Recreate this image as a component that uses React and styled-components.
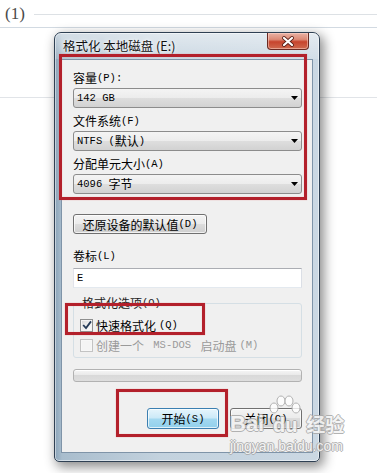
import React from 'react';
import styled, { createGlobalStyle } from 'styled-components';

const Global = createGlobalStyle`
  html, body { margin: 0; padding: 0; background: #fff; }
  body { font-family: "Noto Sans CJK SC", "Noto Sans", sans-serif; }
`;

const Page = styled.div`
  position: relative;
  width: 377px;
  height: 473px;
  overflow: hidden;
  background:
    linear-gradient(to bottom, transparent 97px, #e1e4e8 97px, #e1e4e8 98px, transparent 98px),
    #fff;
`;

const TopStrip = styled.div`
  height: 27px;
  border-bottom: 1px solid #d2dae2;
  display: flex;
  align-items: center;
  gap: 9px;
  padding-left: 5px;
`;

const StepNo = styled.span`
  font-family: "Liberation Serif", serif;
  font-size: 17px;
  color: #4a4a4a;
  line-height: 1;
`;

const Rule = styled.div`
  flex: 1;
  height: 1px;
  margin-top: 1px;
  background: #dde1e5;
`;

const Dialog = styled.div`
  position: relative;
  box-sizing: border-box;
  width: 266px;
  height: 430px;
  margin: 4px 0 0 54px;
  border: 1px solid #2f4053;
  border-radius: 7px 7px 5px 5px;
  padding: 0 6px 8px;
  background: linear-gradient(to right, #8aa3b8 0, #a9bdcd 7px, #c3d2de 40%, #cbd8e3 100%);
  box-shadow: 3px 4px 12px 1px rgba(0, 0, 0, 0.45), inset 0 0 0 1px rgba(255, 255, 255, 0.5);
  display: flex;
  flex-direction: column;
`;

const TitleBar = styled.div`
  height: 26px;
  display: flex;
  justify-content: space-between;
  align-items: flex-start;
  background: linear-gradient(to bottom, rgba(255,255,255,0.5), rgba(255,255,255,0.15));
  margin: 0 -6px;
  padding: 0 6px;
  border-radius: 6px 6px 0 0;
`;

const Title = styled.span`
  padding-left: 2px;
  line-height: 26px;
  font-size: 12.5px;
  color: #111;
  white-space: pre;
  text-shadow: 0 0 6px #fff, 0 0 3px #fff;
`;

const CloseBtn = styled.div`
  box-sizing: border-box;
  width: 42px;
  height: 17px;
  margin-right: 4px;
  border: 1px solid #6a2a22;
  border-top: 0;
  border-radius: 0 0 4px 4px;
  background: linear-gradient(to bottom, #eab2a4 0%, #dd8a76 40%, #c7442d 55%, #cf6a4f 100%);
  box-shadow: inset 0 0 0 1px rgba(255, 220, 210, 0.5);
  display: flex;
  align-items: center;
  justify-content: center;
`;

const Client = styled.div`
  flex: 1;
  background: #f0f0f0;
  border: 1px solid #7f94a8;
  padding: 8px 10px 0 11px;
  display: flex;
  flex-direction: column;
`;

const Field = styled.div`
  margin-top: ${(p) => p.$mt || 0}px;
  display: flex;
  flex-direction: column;
`;

const Label = styled.div`
  height: 20px;
  line-height: 20px;
  font-size: 12px;
  color: #000;
  white-space: pre;
  display: flex;
  align-items: center;
`;

const Han = styled.span`
  font-family: "Noto Sans CJK SC", sans-serif;
  font-size: 12px;
  white-space: pre;
`;

const Lat = styled.span`
  font-family: "Liberation Mono", monospace;
  font-size: 10.5px;
  white-space: pre;
`;

const Select = styled.div`
  box-sizing: border-box;
  height: 20px;
  border: 1px solid #8c8c8c;
  border-radius: 3px;
  background: linear-gradient(to bottom, #f4f4f4 0%, #ececec 50%, #dedede 50%, #d2d2d2 100%);
  display: flex;
  align-items: center;
  justify-content: space-between;
  padding: 0 3px;
  color: #000;
`;

const SelText = styled.span`
  display: flex;
  align-items: center;
  line-height: 18px;
`;

const PushButton = styled.div`
  box-sizing: border-box;
  width: ${(p) => p.$w}px;
  height: ${(p) => p.$h || 20}px;
  margin-top: ${(p) => p.$mt || 0}px;
  border: 1px solid ${(p) => (p.$primary ? '#3c7fb1' : '#707070')};
  border-radius: 3px;
  background: ${(p) =>
    p.$primary
      ? 'linear-gradient(to bottom, #e6f5fc 0%, #cdeaf8 45%, #a2d8f0 55%, #92d0ec 100%)'
      : 'linear-gradient(to bottom, #f4f4f4 0%, #ebebeb 50%, #dddddd 50%, #cfcfcf 100%)'};
  box-shadow: inset 0 0 0 1px rgba(255, 255, 255, 0.7);
  display: flex;
  align-items: center;
  justify-content: center;
  color: #000;
`;

const TextBox = styled.div`
  box-sizing: border-box;
  height: 20px;
  margin-top: 2px;
  background: #fff;
  border: 1px solid;
  border-color: #abadb3 #dbdfe6 #e3e9ef #e2e3ea;
  padding-left: 3px;
  display: flex;
  align-items: center;
  color: #000;
`;

const Group = styled.fieldset`
  margin: 8px 0 0;
  padding: 0 6px 2px;
  min-width: 0;
  border: 1px solid #d5dfe5;
  border-radius: 3px;
`;

const GroupTitle = styled.legend`
  padding: 0 2px;
  margin-left: 0;
  line-height: 14px;
  height: 14px;
  display: flex;
  align-items: center;
  color: #222;
`;

const CheckRow = styled.div`
  height: 20px;
  margin-top: ${(p) => p.$mt || 0}px;
  display: flex;
  align-items: center;
  gap: 3px;
  color: ${(p) => (p.$disabled ? '#9a9a9a' : '#000')};
`;

const Box = styled.div`
  box-sizing: border-box;
  width: 13px;
  height: 13px;
  border: 1px solid ${(p) => (p.$disabled ? '#c3c3c3' : '#8e8f8f')};
  background: ${(p) =>
    p.$disabled ? '#f4f4f4' : 'linear-gradient(135deg, #d8d8d8 0%, #f2f2f2 60%, #ffffff 100%)'};
  box-shadow: inset 0 0 0 1px ${(p) => (p.$disabled ? '#f7f7f7' : '#f4f4f4')};
  display: flex;
  align-items: center;
  justify-content: center;
`;

const Progress = styled.div`
  box-sizing: border-box;
  height: 13px;
  margin-top: 11px;
  border: 1px solid #b2b2b2;
  border-radius: 3px;
  background: linear-gradient(to bottom, #f6f6f6 0%, #e8e8e8 50%, #d9d9d9 50%, #dedede 100%);
  box-shadow: inset 0 1px 0 #fff;
`;

const ButtonRow = styled.div`
  margin-top: 26px;
  display: flex;
  justify-content: flex-end;
  gap: 11px;
`;

const Mark = styled.div`
  position: absolute;
  box-sizing: border-box;
  left: ${(p) => p.$x}px;
  top: ${(p) => p.$y}px;
  width: ${(p) => p.$w}px;
  height: ${(p) => p.$h}px;
  border: 3px solid #b3202b;
  box-shadow: 0 0 1px rgba(230, 120, 120, 0.7), inset 0 0 1px rgba(230, 120, 120, 0.7);
  pointer-events: none;
`;

const Watermark = styled.div`
  position: absolute;
  left: 230px;
  top: 394px;
  width: 122px;
  opacity: 0.88;
  pointer-events: none;
`;

const WmTop = styled.div`
  height: 41px;
  display: flex;
  align-items: flex-end;
`;

const outline = `
  color: rgba(255, 255, 255, 0.9);
  text-shadow: 1px 0 0 #a9a9a9, -1px 0 0 #a9a9a9, 0 1px 0 #a9a9a9, 0 -1px 0 #a9a9a9;
`;

const WmBai = styled.span`
  font-family: "Liberation Sans", sans-serif;
  font-weight: bold;
  font-size: 22px;
  line-height: 22px;
  ${outline}
`;

const WmPaw = styled.div`
  display: flex;
  flex-direction: column;
  align-items: center;
  margin-left: 5px;
`;

const WmDu = styled.span`
  font-family: "Liberation Sans", sans-serif;
  font-weight: bold;
  font-size: 20px;
  line-height: 20px;
  ${outline}
`;

const WmJy = styled.span`
  font-family: "Noto Sans CJK SC", sans-serif;
  font-weight: bold;
  font-size: 19px;
  line-height: 22px;
  margin-left: 5px;
  ${outline}
`;

const WmUrl = styled.div`
  margin-top: 4px;
  font-family: "Liberation Sans", sans-serif;
  font-size: 14px;
  line-height: 14px;
  ${outline}
`;

function Sim({ text }) {
  const runs = [];
  let cur = '';
  let curA = null;
  for (const ch of text) {
    const a = ch.charCodeAt(0) < 128;
    if (curA === null || a === curA) cur += ch;
    else {
      runs.push([curA, cur]);
      cur = ch;
    }
    curA = a;
  }
  if (cur) runs.push([curA, cur]);
  return runs.map(([a, t], i) => (a ? <Lat key={i}>{t}</Lat> : <Han key={i}>{t}</Han>));
}

const Arrow = () => (
  <svg width="7" height="4" viewBox="0 0 7 4">
    <polygon points="0,0 7,0 3.5,4" fill="#000" />
  </svg>
);

const Combo = ({ value }) => (
  <Select>
    <SelText>
      <Sim text={value} />
    </SelText>
    <Arrow />
  </Select>
);

const Check = ({ checked, disabled, text, mt }) => (
  <CheckRow $disabled={disabled} $mt={mt}>
    <Box $disabled={disabled}>
      {checked && (
        <svg width="10" height="10" viewBox="0 0 10 10">
          <path d="M1.2 5 L4 8 L9 1.4" fill="none" stroke="#243a57" strokeWidth="1.8" />
        </svg>
      )}
    </Box>
    <Sim text={text} />
  </CheckRow>
);

export default function App() {
  return (
    <>
      <Global />
      <Page>
        <TopStrip>
          <StepNo>(1)</StepNo>
          <Rule />
        </TopStrip>
        <Dialog>
          <TitleBar>
            <Title>格式化 本地磁盘 (E:)</Title>
            <CloseBtn>
              <svg width="14" height="11" viewBox="0 0 14 11">
                <path d="M3 2 L11 9 M11 2 L3 9" stroke="#5c2118" strokeWidth="3.8" strokeLinecap="round" />
                <path d="M3 2 L11 9 M11 2 L3 9" stroke="#fff" strokeWidth="2.2" strokeLinecap="round" />
              </svg>
            </CloseBtn>
          </TitleBar>
          <Client>
            <Field>
              <Label><Sim text="容量(P):" /></Label>
              <Combo value="142 GB" />
            </Field>
            <Field $mt={3}>
              <Label><Sim text="文件系统(F)" /></Label>
              <Combo value="NTFS (默认)" />
            </Field>
            <Field $mt={3}>
              <Label><Sim text="分配单元大小(A)" /></Label>
              <Combo value="4096 字节" />
            </Field>
            <PushButton $w={134} $mt={20}>
              <Sim text="还原设备的默认值(D)" />
            </PushButton>
            <Field $mt={12}>
              <Label><Sim text="卷标(L)" /></Label>
              <TextBox><Sim text="E" /></TextBox>
            </Field>
            <Group>
              <GroupTitle><Sim text="格式化选项(O)" /></GroupTitle>
              <Check checked text="快速格式化(Q)" mt={5} />
              <Check disabled text="创建一个 MS-DOS 启动盘(M)" />
            </Group>
            <Progress />
            <ButtonRow>
              <PushButton $w={72} $h={21} $primary>
                <Sim text="开始(S)" />
              </PushButton>
              <PushButton $w={72} $h={21}>
                <Sim text="关闭(C)" />
              </PushButton>
            </ButtonRow>
          </Client>
          <Mark $x={4} $y={21} $w={248} $h={146} />
          <Mark $x={10} $y={270} $w={140} $h={32} />
          <Mark $x={61} $y={356} $w={112} $h={48} />
        </Dialog>
        <Watermark>
          <WmTop>
            <WmBai>Bai</WmBai>
            <WmPaw>
              <svg width="32" height="20" viewBox="0 0 32 20">
                <g fill="rgba(255,255,255,0.9)" stroke="#a9a9a9" strokeWidth="1">
                  <ellipse cx="5" cy="13" rx="4" ry="5" />
                  <ellipse cx="12" cy="6" rx="4" ry="5" />
                  <ellipse cx="20" cy="6" rx="4" ry="5" />
                  <ellipse cx="27" cy="13" rx="4" ry="5" />
                </g>
              </svg>
              <WmDu>du</WmDu>
            </WmPaw>
            <WmJy>经验</WmJy>
          </WmTop>
          <WmUrl>jingyan.baidu.com</WmUrl>
        </Watermark>
      </Page>
    </>
  );
}
